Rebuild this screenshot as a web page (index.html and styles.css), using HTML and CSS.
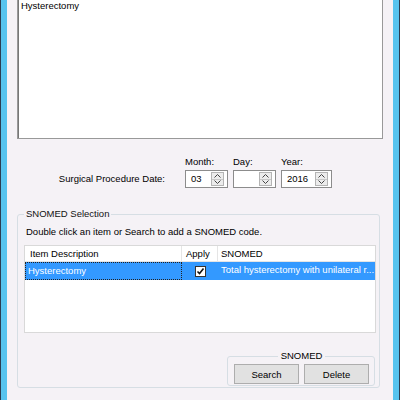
FILE: index.html
```html
<!DOCTYPE html>
<html>
  <head>
    <meta charset="UTF-8">
    <title>Surgical Procedure</title>
    <link rel="stylesheet" href="styles.css">
  </head>
  <body>
    <div class="frame">
      <div class="window">
        <div class="notes">Hysterectomy</div>

        <div class="date-row">
          <div class="date-label">Surgical Procedure Date:</div>
          <div class="field">
            <div class="field-label">Month:</div>
            <div class="spinner month">
              <span class="spin-value">03</span>
              <span class="spin-buttons">
                <span class="spin-btn"><svg width="7" height="4" viewBox="0 0 7 4"><path d="M0.5 3.5 L3.5 0.5 L6.5 3.5" fill="none" stroke="#444" stroke-width="1"/></svg></span>
                <span class="spin-btn"><svg width="7" height="4" viewBox="0 0 7 4"><path d="M0.5 0.5 L3.5 3.5 L6.5 0.5" fill="none" stroke="#444" stroke-width="1"/></svg></span>
              </span>
            </div>
          </div>
          <div class="field">
            <div class="field-label">Day:</div>
            <div class="spinner day">
              <span class="spin-value"></span>
              <span class="spin-buttons">
                <span class="spin-btn"><svg width="7" height="4" viewBox="0 0 7 4"><path d="M0.5 3.5 L3.5 0.5 L6.5 3.5" fill="none" stroke="#444" stroke-width="1"/></svg></span>
                <span class="spin-btn"><svg width="7" height="4" viewBox="0 0 7 4"><path d="M0.5 0.5 L3.5 3.5 L6.5 0.5" fill="none" stroke="#444" stroke-width="1"/></svg></span>
              </span>
            </div>
          </div>
          <div class="field">
            <div class="field-label">Year:</div>
            <div class="spinner year">
              <span class="spin-value">2016</span>
              <span class="spin-buttons">
                <span class="spin-btn"><svg width="7" height="4" viewBox="0 0 7 4"><path d="M0.5 3.5 L3.5 0.5 L6.5 3.5" fill="none" stroke="#444" stroke-width="1"/></svg></span>
                <span class="spin-btn"><svg width="7" height="4" viewBox="0 0 7 4"><path d="M0.5 0.5 L3.5 3.5 L6.5 0.5" fill="none" stroke="#444" stroke-width="1"/></svg></span>
              </span>
            </div>
          </div>
        </div>

        <fieldset class="snomed">
          <legend>SNOMED Selection</legend>
          <div class="hint">Double click an item or Search to add a SNOMED code.</div>
          <div class="listview">
            <div class="lv-row lv-head">
              <div class="col-desc">Item Description</div>
              <div class="col-apply">Apply</div>
              <div class="col-code">SNOMED</div>
            </div>
            <div class="lv-row lv-item selected">
              <div class="col-desc focus">Hysterectomy</div>
              <div class="col-apply">
                <span class="checkbox"><svg width="9" height="9" viewBox="0 0 9 9"><path d="M1.5 4.5 L3.5 6.5 L7.5 1.5" fill="none" stroke="#111" stroke-width="1.6"/></svg></span>
              </div>
              <div class="col-code">Total hysterectomy with unilateral r...</div>
            </div>
          </div>

          <fieldset class="mini">
            <legend>SNOMED</legend>
            <div class="buttons">
              <button class="btn">Search</button>
              <button class="btn">Delete</button>
            </div>
          </fieldset>
        </fieldset>
      </div>
    </div>
  </body>
</html>
```

FILE: styles.css
```css
body {
  margin: 0;
  font-family: "Liberation Sans", Arial, sans-serif;
  font-size: 9.5px;
  color: #000;
}

.frame {
  height: 100vh;
  overflow: hidden;
  border-left: 1px solid #2a3d52;
  border-right: 1px solid #2a3d52;
}

.window {
  height: 100%;
  background-color: #f5f2f6;
  border-left: 6px solid #56c4ef;
  border-right: 6px solid #56c4ef;
  overflow: hidden;
}

.notes {
  margin: -2px 0 0 10px;
  width: 366px;
  height: 141px;
  box-sizing: border-box;
  background-color: #fff;
  border: 1px solid #999;
  box-shadow: inset 1px 1px 0 #777;
  padding: 1px 3px;
  line-height: 12px;
}

.date-row {
  display: flex;
  align-items: flex-end;
  margin-top: 17px;
}

.date-label {
  width: 158px;
  margin-right: 20px;
  text-align: right;
  line-height: 18px;
}

.field {
  margin-right: 5px;
}

.field-label {
  line-height: 12px;
  margin-bottom: 2px;
}

.spinner {
  display: flex;
  align-items: center;
  height: 18px;
  box-sizing: border-box;
  background-color: #fff;
  border: 1px solid #8c8c8c;
  padding: 0 3px 0 5px;
}

.month,
.day {
  width: 43px;
}

.year {
  width: 51px;
}

.spin-value {
  flex: 1;
  line-height: 16px;
}

.spin-buttons {
  display: flex;
  flex-direction: column;
  width: 13px;
  height: 14px;
  border: 1px solid #b4b4b4;
  box-sizing: border-box;
}

.spin-btn {
  flex: 1;
  display: flex;
  align-items: center;
  justify-content: center;
  background-color: #ececec;
}

.spin-btn + .spin-btn {
  border-top: 1px solid #c8c8c8;
}

.snomed {
  margin: 20px 0 0 10px;
  width: 363px;
  min-width: 0;
  box-sizing: border-box;
  border: 1px solid #d6dee4;
  border-radius: 3px;
  padding: 6px 3px 1px 6px;
}

.snomed > legend {
  padding: 0 2px;
  line-height: 12px;
  color: #111;
}

.hint {
  margin-left: 2px;
  line-height: 12px;
  margin-bottom: 7px;
}

.listview {
  height: 88px;
  box-sizing: border-box;
  background-color: #fff;
  border: 1px solid #d9d9d9;
}

.lv-row {
  display: flex;
}

.lv-head {
  height: 15px;
  line-height: 15px;
  border-bottom: 1px solid #e5e5e5;
}

.lv-head .col-desc,
.lv-head .col-apply {
  border-right: 1px solid #e5e5e5;
}

.col-desc {
  width: 151px;
  padding-left: 5px;
  flex-shrink: 0;
}

.col-apply {
  width: 31px;
  padding-left: 4px;
  flex-shrink: 0;
}

.col-code {
  flex: 1;
  padding-left: 3px;
  white-space: nowrap;
  overflow: hidden;
}

.lv-item {
  height: 18px;
  line-height: 16px;
  background-color: #3399ff;
  color: #fff;
}

.lv-item .col-desc {
  width: 153px;
  padding-left: 2px;
  border: 1px dotted #222;
}

.lv-item .col-apply {
  display: flex;
  align-items: center;
  justify-content: center;
  padding-left: 0;
  width: 36px;
}

.checkbox {
  display: flex;
  align-items: center;
  justify-content: center;
  width: 11px;
  height: 11px;
  box-sizing: border-box;
  background-color: #fff;
  border: 1px solid #333;
}

.mini {
  margin: 17px 1px 0 auto;
  width: 148px;
  min-width: 0;
  box-sizing: border-box;
  border: 1px solid #d6dee4;
  border-radius: 3px;
  padding: 2px 5px 1px 6px;
}

.mini > legend {
  margin: 0 auto;
  padding: 0 3px;
  line-height: 12px;
}

.buttons {
  display: flex;
  gap: 5px;
}

.btn {
  width: 65px;
  height: 20px;
  padding: 0;
  font-family: "Liberation Sans", Arial, sans-serif;
  font-size: 9.5px;
  color: #000;
  background-color: #e1e1e1;
  border: 1px solid #adadad;
}
```
